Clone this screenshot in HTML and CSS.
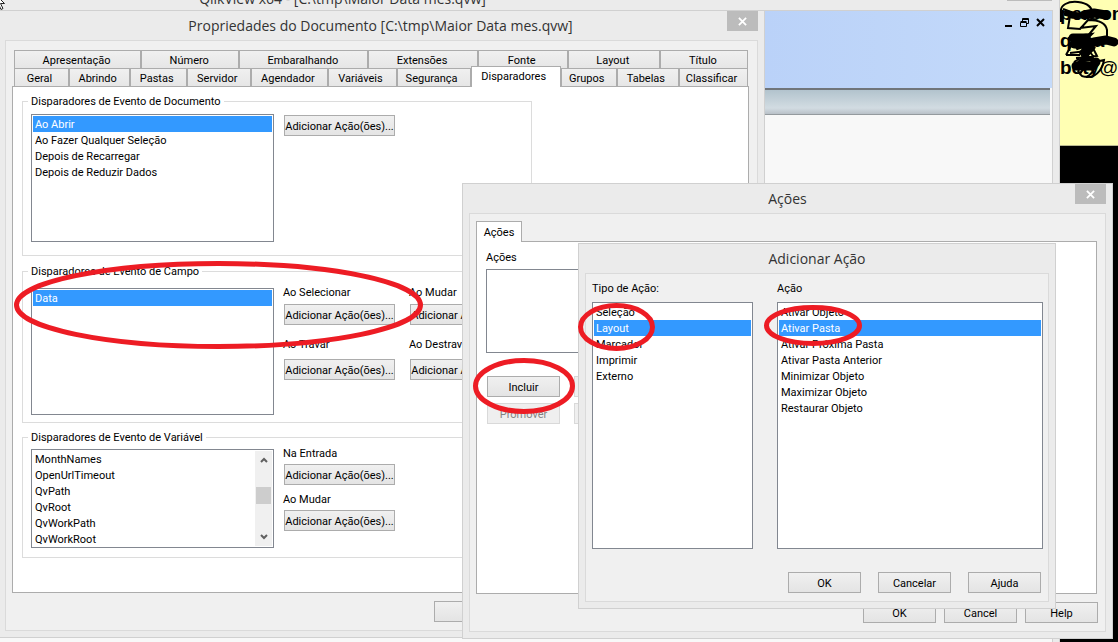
FILE: index.html
```html
<!DOCTYPE html>
<html lang="pt-BR">
<head>
<meta charset="utf-8">
<title>Propriedades do Documento</title>
<link rel="stylesheet" href="styles.css">
</head>
<body>
<div class="desktop">

  <aside class="note">
    <p>person</p>
    <p>q ioa</p>
    <p>bety<span class="thin">@</span></p>
    <svg class="scribble" viewBox="0 0 58 90" aria-hidden="true">
      <path d="M1 22V12C0 5 8 1 18 2C28 3 32 8 32 12C28 16 14 14 3 9M8 14C14 24 18 10 28 14C34 16 24 20 30 20L38 12M10 16L8 28L20 29L28 20C40 20 46 24 47 30V36M20 28L36 26L26 38M6 55L12 44L32 46L24 54M6 55H20M10 53L34 50L37 56L16 58M14 62L30 52L36 60M22 60L18 72M36 62C34 76 24 80 20 74C24 66 34 62 44 60C42 72 34 78 26 77"/>
      <path class="mid" d="M4 13L20 17M14 15H28M12 38L28 36L16 48L33 42L20 54L34 46L22 60L34 58"/>
      <path class="thick" d="M24 15L34 13L46 15M13 38L26 38L14 44L28 44L26 50M16 66L32 66L36 62M34 42L46 40L54 42"/>
    </svg>
  </aside>

  <main class="app">
    <header class="app-title">QlikView x64 - [C:\tmp\Maior Data mes.qvw]<span class="app-close"></span></header>
    <section class="app-client">
      <div class="menu-band">
        <button class="mdi" aria-label="Minimizar"><svg viewBox="0 0 9 9"><path d="M1 8h7" stroke-width="2"/></svg></button>
        <button class="mdi" aria-label="Restaurar"><svg viewBox="0 0 9 9"><path d="M2.500 3V.500H8.500V5.500H7M2.500 1.500H8.500M.5 4.500H6.500V8.500H.5ZM.5 3.500H6.500"/></svg></button>
        <button class="mdi" aria-label="Fechar"><svg viewBox="0 0 9 9"><path d="M1 1L8 8M8 1L1 8" stroke-width="2"/></svg></button>
      </div>
      <div class="tool-band"></div>
    </section>
  </main>

  <svg class="cursor" viewBox="0 0 8 12" aria-hidden="true"><path d="M-3 -4L4.500 3.500H.5L3 8.500L1 9.500L-1 5"/></svg>

  <section class="window doc">
    <h1 class="title">Propriedades do Documento [C:\tmp\Maior Data mes.qvw]</h1>
    <button class="close" aria-label="Fechar"><svg viewBox="0 0 10 10"><path d="M1 1L9 9M9 1L1 9"/></svg></button>
    <div class="client">
      <nav class="tabs">
        <div class="tab-row back">
          <button>Apresentação</button><button>Número</button><button>Embaralhando</button><button>Extensões</button><button>Fonte</button><button>Layout</button><button>Título</button>
        </div>
        <div class="tab-row front">
          <button>Geral</button><button>Abrindo</button><button>Pastas</button><button>Servidor</button><button>Agendador</button><button>Variáveis</button><button>Segurança</button><button class="active">Disparadores</button><button>Grupos</button><button>Tabelas</button><button>Classificar</button>
        </div>
      </nav>
      <div class="panel">
        <fieldset class="group group-doc">
          <legend>Disparadores de Evento de Documento</legend>
          <div class="group-body">
            <select class="list" size="7" aria-label="Disparadores de Evento de Documento">
              <option selected>Ao Abrir</option><option>Ao Fazer Qualquer Seleção</option><option>Depois de Recarregar</option><option>Depois de Reduzir Dados</option>
            </select>
            <div><button class="btn wide">Adicionar Ação(ões)...</button></div>
          </div>
        </fieldset>
        <fieldset class="group group-field">
          <legend>Disparadores de Evento de Campo</legend>
          <div class="group-body">
            <select class="list" size="7" aria-label="Disparadores de Evento de Campo">
              <option selected>Data</option>
            </select>
            <div class="events">
              <p>Ao Selecionar</p><p>Ao Mudar</p>
              <button class="btn wide">Adicionar Ação(ões)...</button><button class="btn wide">Adicionar Ação(ões)...</button>
              <p class="second">Ao Travar</p><p class="second">Ao Destravar</p>
              <button class="btn wide late">Adicionar Ação(ões)...</button><button class="btn wide late">Adicionar Ação(ões)...</button>
            </div>
          </div>
        </fieldset>
        <fieldset class="group group-var">
          <legend>Disparadores de Evento de Variável</legend>
          <div class="group-body">
            <div class="scroll-list">
              <select class="list" size="6" aria-label="Disparadores de Evento de Variável">
                <option>MonthNames</option><option>OpenUrlTimeout</option><option>QvPath</option><option>QvRoot</option><option>QvWorkPath</option><option>QvWorkRoot</option>
              </select>
              <div class="scrollbar">
                <svg viewBox="0 0 8 6"><path d="M1 5L4 2L7 5"/></svg>
                <i></i>
                <svg viewBox="0 0 8 6"><path d="M1 1L4 4L7 1"/></svg>
              </div>
            </div>
            <div class="events single">
              <p>Na Entrada</p>
              <button class="btn wide">Adicionar Ação(ões)...</button>
              <p>Ao Mudar</p>
              <button class="btn wide">Adicionar Ação(ões)...</button>
            </div>
          </div>
        </fieldset>
      </div>
      <footer class="foot"><button class="btn" aria-label="OK"></button></footer>
    </div>
  </section>

  <section class="window actions">
    <h2 class="title">Ações</h2>
    <button class="close" aria-label="Fechar"><svg viewBox="0 0 10 10"><path d="M1 1L9 9M9 1L1 9"/></svg></button>
    <div class="client">
      <nav class="tabs"><button class="only">Ações</button></nav>
      <div class="panel">
        <label for="acts">Ações</label>
        <select id="acts" class="list" size="5"></select>
        <div class="act-buttons">
          <button class="btn">Incluir</button><button class="btn" disabled aria-label="Excluir"></button>
          <button class="btn" disabled>Promover</button><button class="btn" disabled aria-label="Rebaixar"></button>
        </div>
      </div>
      <footer class="foot"><button class="btn">OK</button><button class="btn">Cancel</button><button class="btn">Help</button></footer>
    </div>
  </section>

  <section class="window add">
    <h2 class="title">Adicionar Ação</h2>
    <div class="client">
      <div class="choices">
        <label for="kind">Tipo de Ação:</label><label for="act">Ação</label>
        <select id="kind" class="list" size="15">
          <option>Seleção</option><option selected>Layout</option><option>Marcador</option><option>Imprimir</option><option>Externo</option>
        </select>
        <select id="act" class="list" size="15">
          <option>Ativar Objeto</option><option selected>Ativar Pasta</option><option>Ativar Próxima Pasta</option><option>Ativar Pasta Anterior</option><option>Minimizar Objeto</option><option>Maximizar Objeto</option><option>Restaurar Objeto</option>
        </select>
      </div>
      <footer class="foot"><button class="btn">OK</button><button class="btn">Cancelar</button><button class="btn">Ajuda</button></footer>
    </div>
  </section>

  <svg class="marks" width="1118" height="642" aria-hidden="true">
    <ellipse cx="218.500" cy="305" rx="202" ry="41.500"/>
    <ellipse cx="524" cy="386" rx="48.500" ry="25.500"/>
    <ellipse cx="616.500" cy="327" rx="36" ry="21.500"/>
    <ellipse cx="813" cy="325.500" rx="46.500" ry="18"/>
  </svg>
</div>
</body>
</html>
```

FILE: styles.css
```css
* { box-sizing: border-box; }
body { margin: 0; background: #000; color: #000; font: 11px/15px Roboto, Arial, sans-serif; }
button, select { font: inherit; color: inherit; margin: 0; border-radius: 0; }
p, h1, h2 { margin: 0; font-weight: normal; }
svg { display: block; fill: none; }

.desktop { position: relative; height: 100vh; min-height: 642px; overflow: hidden; }

/* sticky note */
.note { position: absolute; left: 1060px; right: 0; top: 0; height: 146px; overflow: hidden; background: #ffffb3; border-bottom: 1px solid #b8b890; }
.note p { font: bold 19px/27px "Liberation Sans", Arial, sans-serif; white-space: nowrap; }
.note .thin { font-weight: normal; }
.scribble { position: absolute; left: 0; top: 0; width: 58px; height: 90px; stroke: #000; stroke-width: 2; }
.scribble .mid { stroke-width: 5; }
.scribble .thick { stroke-width: 9; stroke-linecap: round; stroke-linejoin: round; }

/* application behind the dialogs */
.app { position: absolute; inset: 0 58px 0 0; display: flex; flex-direction: column; background: #ebebeb; border-right: 1px solid #d0d0d0; }
.app-title { display: flex; justify-content: center; align-items: flex-end; height: 10px; padding-right: 374px; font: 14px/22px "Open Sans", sans-serif; color: #333; overflow: hidden; position: relative; }
.app-close { position: absolute; right: 7px; top: 0; width: 45px; height: 1px; background: #bcbcbc; }
.app-client { flex: 1; margin-right: 6px; border: 1px solid #d0d0d0; border-width: 1px 1px 0 0; background: #f8f8f8; }
.menu-band { display: flex; justify-content: flex-end; gap: 7px; height: 77px; padding: 7px 7px 0 0; background: linear-gradient(90deg, #b9d1f8 70%, #c4dafa); }
.mdi { width: 9px; height: 9px; padding: 0; border: 0; background: none; }
.mdi svg { width: 9px; height: 9px; stroke: #000; }
.tool-band { height: 27px; margin-right: 2px; border-top: 2px solid #70757a; border-bottom: 1px solid #949a9e; background: linear-gradient(#b2c3cd, #d2dce2 75%, #b9c1c8); }

.cursor { position: absolute; left: 0; top: 0; width: 8px; height: 12px; fill: #fff; stroke: #222; z-index: 1; }

/* windows */
.window { position: absolute; background: #ebebeb; border: 1px solid #d0d0d0; padding: 0 6px 6px; }
.title { height: 29px; font: 14px/29px "Open Sans", sans-serif; color: #333; text-align: center; }
.doc .title { padding-right: 2px; }
.close { position: absolute; right: 6px; top: 0; width: 31px; height: 20px; display: grid; place-items: center; padding: 0; border: 0; background: #bcbcbc; }
.close svg { width: 9px; height: 9px; stroke: #fff; stroke-width: 2; }
.client { border: 1px solid #dadada; background: #f0f0f0; }
.doc { left: -2px; top: 10px; width: 767px; }
.actions { left: 462px; top: 183px; width: 651px; }
.add { left: 578px; top: 243px; width: 478px; }

.btn { width: 73px; height: 21px; padding: 2px 0 0; border: 1px solid #acacac; background: linear-gradient(#f0f0f0, #e4e4e4); white-space: nowrap; line-height: 17px; }
.btn.wide { width: 111px; }
.btn:disabled { color: #838383; background: #efefef; border-color: #d9d9d9; }
.foot { display: flex; justify-content: flex-end; gap: 8px; padding-top: 8px; }
.panel { border: 1px solid #acacac; background: #fff; }

/* list boxes */
.list { display: block; width: 243px; height: 128px; padding: 1px; border: 1px solid #828790; background: #fff; overflow: hidden; outline: 0; appearance: none; }
.list option { min-height: 16px; height: 16px; padding: 2px 2px 0; color: #000; }
.list option:checked { background: #39f linear-gradient(#39f, #39f); color: #fff; -webkit-text-fill-color: #fff; }

/* document properties */
.doc .client { padding: 9px 8px 8px 6px; }
.doc .tabs { margin: 0 1px 0 2px; }
.tab-row { display: grid; }
.tab-row.back { grid-template-columns: 127fr 98fr 129fr 109fr 90fr 92fr 88fr; }
.tab-row.front { grid-template-columns: 55fr 61fr 57fr 64fr 77fr 68fr 74fr 90fr 56fr 62fr 69fr; }
.tab-row button { height: 18px; padding: 1px 2px 0 0; min-width: 0; border: 1px solid #acacac; border-bottom: 0; background: linear-gradient(#f0f0f0, #e6e6e6); white-space: nowrap; }
.tab-row.front button { padding-right: 4px; }
.tab-row.front .active { height: 21px; margin: -2px 0 -1px; padding: 0 4px 2px 0; background: #fff; z-index: 1; }
.doc .panel { padding: 7px 9px 34px; }
.group { width: 510px; margin: 0; padding: 0 8px; border: 1px solid #dcdcdc; }
.group legend { margin-left: -3px; padding: 0 3px; }
.group-body { display: flex; gap: 10px; }
.group-doc { padding-top: 5px; padding-bottom: 13px; margin-bottom: 8px; }
.group-doc .btn { margin-top: 1px; }
.group-field { padding-top: 9px; padding-bottom: 7px; margin-bottom: 7px; }
.group-field .list { height: 127px; }
.group-var { padding-top: 4px; padding-bottom: 9px; }
.events { display: grid; grid-template-columns: 111px 111px; column-gap: 15px; align-content: start; margin-top: -3px; }
.events p { height: 19px; margin-left: -1px; }
.events .second { margin-top: 12px; }
.events .late { margin-top: 3px; }
.events.single { grid-template-columns: 111px; }
.events.single p { height: 18px; }
.events.single .btn { margin-bottom: 7px; }
.scroll-list { display: flex; width: 243px; height: 99px; padding: 1px; border: 1px solid #828790; }
.scroll-list .list { flex: 1; height: 97px; height: 95px; padding: 0; border: 0; }
.scrollbar { width: 17px; display: flex; flex-direction: column; align-items: center; justify-content: space-between; padding: 6px 1px; background: #f0f0f0; }
.scrollbar svg { width: 8px; height: 6px; stroke: #606060; stroke-width: 2; }
.scrollbar i { width: 15px; height: 17px; margin-top: 17px; margin-bottom: 24px; background: #cdcdcd; }
.doc .foot { justify-content: flex-start; margin-left: 422px; }

/* actions */
.actions .client { padding: 7px 8px 8px 6px; }
.only { position: relative; z-index: 1; display: block; width: 46px; height: 21px; margin-bottom: -1px; padding: 0; border: 1px solid #acacac; border-bottom: 0; background: #fff; }
.actions .panel { min-height: 353px; padding: 8px 9px; }
.actions .list { width: 80%; height: 84px; margin-top: 4px; }
.act-buttons { display: grid; grid-template-columns: 73px 73px; gap: 6px 14px; margin: 23px 0 0 1px; }
.actions .foot { margin-right: -1px; }

/* add action */
.add .client { padding: 7px 5px 8px 6px; }
.choices { display: grid; grid-template-columns: 161fr 266fr; column-gap: 24px; }
.choices .list { width: 100%; height: 247px; margin-top: 6px; }
.add .foot { gap: 17px; padding: 23px 2px 0 0; }

/* highlighted steps */
.marks { position: absolute; left: 0; top: 0; stroke: #ed1c24; stroke-width: 5; pointer-events: none; }
```
